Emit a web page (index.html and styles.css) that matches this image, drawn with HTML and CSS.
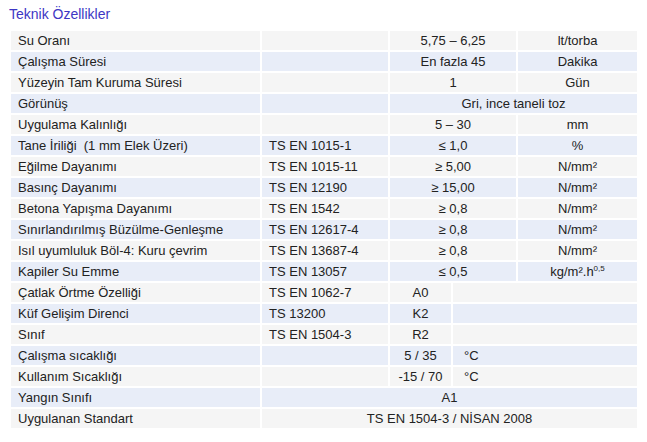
FILE: index.html
```html
<!DOCTYPE html>
<html lang="tr">
<head>
<meta charset="utf-8">
<title>Teknik Özellikler</title>
<link rel="stylesheet" href="styles.css">
</head>
<body>
<h2 class="title">Teknik Özellikler</h2>
<table class="spec">
  <colgroup>
    <col class="c1"><col class="c2"><col class="c3"><col class="c4"><col class="c5">
  </colgroup>
  <tbody>
    <tr><td>Su Oranı</td><td></td><td class="ctr" colspan="2">5,75 – 6,25</td><td class="ctr">lt/torba</td></tr>
    <tr><td>Çalışma Süresi</td><td></td><td class="ctr" colspan="2">En fazla 45</td><td class="ctr">Dakika</td></tr>
    <tr><td>Yüzeyin Tam Kuruma Süresi</td><td></td><td class="ctr" colspan="2">1</td><td class="ctr">Gün</td></tr>
    <tr><td>Görünüş</td><td></td><td class="ctr" colspan="3">Gri, ince taneli toz</td></tr>
    <tr><td>Uygulama Kalınlığı</td><td></td><td class="ctr" colspan="2">5 – 30</td><td class="ctr">mm</td></tr>
    <tr><td>Tane İriliği&nbsp; (1 mm Elek Üzeri)</td><td>TS EN 1015-1</td><td class="ctr" colspan="2">≤ 1,0</td><td class="ctr">%</td></tr>
    <tr><td>Eğilme Dayanımı</td><td>TS EN 1015-11</td><td class="ctr" colspan="2">≥ 5,00</td><td class="ctr">N/mm²</td></tr>
    <tr><td>Basınç Dayanımı</td><td>TS EN 12190</td><td class="ctr" colspan="2">≥ 15,00</td><td class="ctr">N/mm²</td></tr>
    <tr><td>Betona Yapışma Dayanımı</td><td>TS EN 1542</td><td class="ctr" colspan="2">≥ 0,8</td><td class="ctr">N/mm²</td></tr>
    <tr><td>Sınırlandırılmış Büzülme-Genleşme</td><td>TS EN 12617-4</td><td class="ctr" colspan="2">≥ 0,8</td><td class="ctr">N/mm²</td></tr>
    <tr><td>Isıl uyumluluk Böl-4: Kuru çevrim</td><td>TS EN 13687-4</td><td class="ctr" colspan="2">≥ 0,8</td><td class="ctr">N/mm²</td></tr>
    <tr><td>Kapiler Su Emme</td><td>TS EN 13057</td><td class="ctr" colspan="2">≤ 0,5</td><td class="ctr">kg/m².h<sup class="exp">0,5</sup></td></tr>
    <tr><td>Çatlak Örtme Özelliği</td><td>TS EN 1062-7</td><td class="ctr">A0</td><td colspan="2"></td></tr>
    <tr><td>Küf Gelişim Direnci</td><td>TS 13200</td><td class="ctr">K2</td><td colspan="2"></td></tr>
    <tr><td>Sınıf</td><td>TS EN 1504-3</td><td class="ctr">R2</td><td colspan="2"></td></tr>
    <tr><td>Çalışma sıcaklığı</td><td></td><td class="ctr">5 / 35</td><td class="deg" colspan="2">°C</td></tr>
    <tr><td>Kullanım Sıcaklığı</td><td></td><td class="ctr">-15 / 70</td><td class="deg" colspan="2">°C</td></tr>
    <tr><td>Yangın Sınıfı</td><td class="ctr" colspan="4">A1</td></tr>
    <tr><td>Uygulanan Standart</td><td class="ctr" colspan="4">TS EN 1504-3 / NİSAN 2008</td></tr>
  </tbody>
</table>
</body>
</html>
```
FILE: styles.css
```css
html, body {
  margin: 0;
  padding: 0;
  background: #ffffff;
}

body {
  font-family: "Liberation Sans", Arial, sans-serif;
  color: #222222;
}

.title {
  margin: 6px 0 7px 9px;
  font-size: 14px;
  font-weight: normal;
  line-height: 16px;
  color: #3d36c4;
}

.spec {
  margin-left: 9px;
  width: 630px;
  table-layout: fixed;
  border-collapse: separate;
  border-spacing: 2px;
  font-size: 13px;
}

.c1 { width: 249px; }
.c2 { width: 126px; }
.c3 { width: 61px; }
.c4 { width: 63px; }
.c5 { width: 119px; }

.spec td {
  height: 19px;
  padding: 0 0 0 7px;
  line-height: 19px;
  white-space: nowrap;
  vertical-align: middle;
  background: #f5f5f5;
}

.spec tr:nth-child(even) td {
  background: #e8edf8;
}

.spec td.ctr {
  text-align: center;
  padding: 0;
}

.spec td.deg {
  padding-left: 11px;
}

.exp {
  font-size: 8px;
  line-height: 0;
  vertical-align: 5px;
}
```
